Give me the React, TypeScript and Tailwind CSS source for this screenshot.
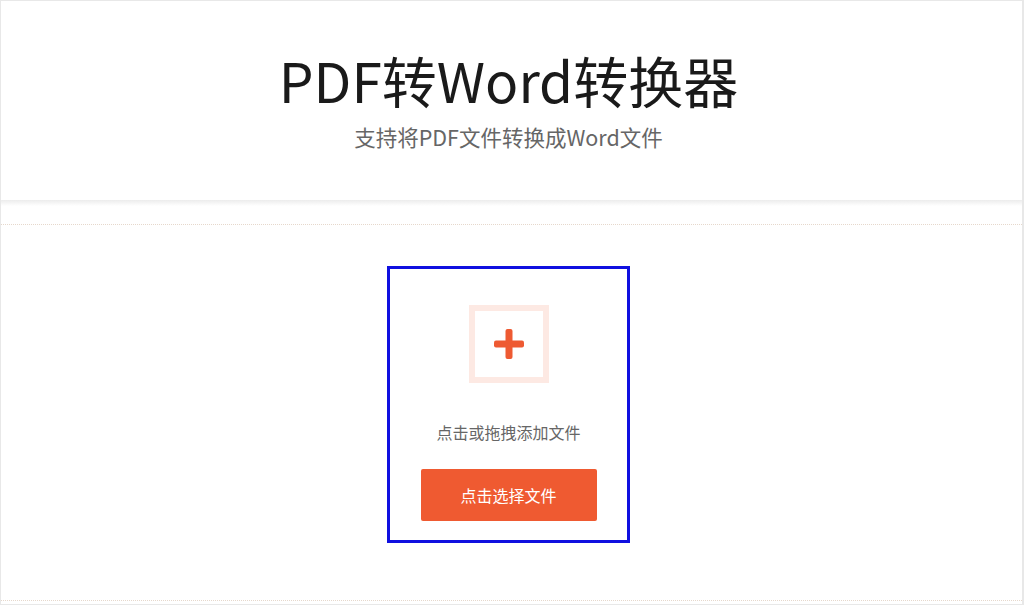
export default function App() {
  return (
    <div
      className="w-[1024px] h-[605px] bg-[#e8e8e8] p-px overflow-hidden"
      style={{ fontFamily: '"Noto Sans CJK SC", "Noto Sans", sans-serif' }}
    >
      <div className="h-full w-[1021px] bg-white flex flex-col">
        {/* 标题区 */}
        <div className="h-[199px] flex flex-col items-center pt-[40px] pr-[6px]">
          <h1 className="text-[55px] leading-[76px] text-[#1a1a1a] font-normal">PDF转Word转换器</h1>
          <p className="text-[21.5px] leading-[30px] text-[#666] mt-[5px]">支持将PDF文件转换成Word文件</p>
        </div>
        <div className="h-[6px] bg-gradient-to-b from-[#ececec] to-white" />
        <div className="h-[18px]" />
        <div className="border-t border-dotted border-[#e6d8cc]" />

        {/* 上传区 */}
        <div className="flex-1 flex flex-col items-center pt-[41px] pr-[6px]">
          <div className="w-[243px] h-[277px] border-[3px] border-[#1010e0] flex flex-col items-center pt-[36px]">
            <div className="w-[80px] h-[78px] border-[6px] border-[#fde9e3] flex items-center justify-center">
              <svg width="30" height="30" viewBox="0 0 30 30">
                <rect x="11.5" y="0" width="7" height="30" rx="2" fill="#ee5a32" />
                <rect x="0" y="11.5" width="30" height="7" rx="2" fill="#ee5a32" />
              </svg>
            </div>
            <p className="mt-[37px] text-[16px] leading-[24px] text-[#666]">点击或拖拽添加文件</p>
            <button className="mt-[25px] w-[176px] h-[52px] bg-[#ef5a31] rounded-[2px] text-white text-[16px]">
              点击选择文件
            </button>
          </div>
        </div>
        <div className="border-t border-dotted border-[#e6d8cc] mb-[3px]" />
      </div>
    </div>
  );
}
